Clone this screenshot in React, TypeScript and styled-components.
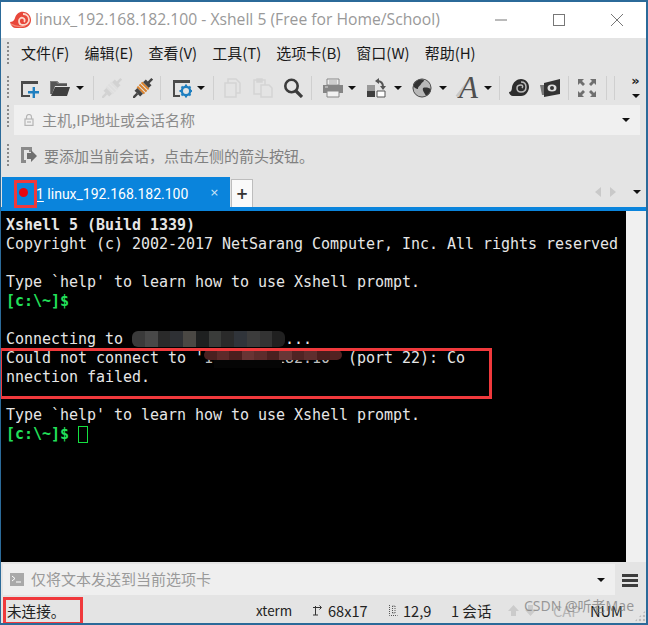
import React from "react";
import styled, { createGlobalStyle } from "styled-components";

const GlobalStyle = createGlobalStyle`
	html, body {
		margin: 0;
		padding: 0;
		background: #e4e4e4;
	}
`;

const uiFont = `"Noto Sans CJK SC", "Noto Sans", sans-serif`;

const Win = styled.div`
	position: relative;
	box-sizing: border-box;
	width: 648px;
	height: 625px;
	display: flex;
	flex-direction: column;
	background: #e4e4e4;
	border-style: solid;
	border-color: #2b6a99;
	border-width: 2px 2px 2px 1px;
	font-family: ${uiFont};
	font-size: 15px;
	overflow: hidden;
`;
const TitleBar = styled.div`
	height: 36px;
	flex: none;
	background: #fff;
	display: flex;
	align-items: center;
	padding-left: 9px;
`;
const TitleText = styled.div`
	flex: 1;
	margin-left: 3px;
	margin-bottom: 2px;
	font-family: "Open Sans", "Noto Sans", sans-serif;
	font-size: 15.7px;
	color: #999;
	white-space: nowrap;
`;
const WinControls = styled.div`
	display: flex;
	align-items: center;
	padding-right: 23px;
	gap: 46px;
`;
const Menu = styled.div`
	height: 32px;
	flex: none;
	display: flex;
	align-items: center;
	padding-left: 6px;
`;
const Grip = styled.div`
	width: 2px;
	height: 24px;
	flex: none;
	background: repeating-linear-gradient(#8a8a8a 0 2px, transparent 2px 4px);
`;
const MenuItem = styled.div<{ $first?: boolean }>`
	margin-left: ${(p) => (p.$first ? "12px" : "15px")};
	margin-bottom: 3px;
	color: #1a1a1a;
	white-space: nowrap;
`;
const Toolbar = styled.div`
	height: 35px;
	flex: none;
	display: flex;
	align-items: center;
	padding-left: 6px;
`;
const Tool = styled.div<{ $gap: number }>`
	margin-left: ${(p) => p.$gap}px;
	width: 20px;
	height: 20px;
	flex: none;
	position: relative;
	& > svg {
		display: block;
	}
`;
const Caret = styled.div<{ $gap?: number }>`
	margin-left: ${(p) => p.$gap ?? 0}px;
	flex: none;
	width: 0;
	height: 0;
	border-left: 4px solid transparent;
	border-right: 4px solid transparent;
	border-top: 4px solid #111;
`;
const Sep = styled.div<{ $gap: number }>`
	margin-left: ${(p) => p.$gap}px;
	flex: none;
	width: 1px;
	height: 24px;
	background: #cfcfcf;
`;
const FontGlyph = styled.span`
	position: absolute;
	left: 2px;
	top: -6px;
	font-family: "Liberation Serif", serif;
	font-style: italic;
	font-size: 31px;
	line-height: 31px;
	color: #4f4f4f;
`;
const FontSlash = styled.span`
	position: absolute;
	left: 5px;
	top: -1px;
	width: 3px;
	height: 22px;
	background: #c8c8c8;
	transform: rotate(38deg);
`;
const Chevrons = styled.div`
	margin-left: 15px;
	display: flex;
	flex-direction: column;
	align-items: center;
	gap: 9px;
	width: 11px;
	font-family: "DejaVu Sans", sans-serif;
	font-size: 13px;
	font-weight: 700;
	line-height: 8px;
	color: #222;
`;
const AddressRow = styled.div`
	height: 30px;
	flex: none;
	display: flex;
	padding-left: 6px;
`;
const AddressField = styled.div`
	flex: 1;
	margin-left: 5px;
	margin-right: 6px;
	padding-left: 10px;
	padding-right: 10px;
	display: flex;
	align-items: center;
	background: #f0f0f0;
`;
const AddressText = styled.div`
	flex: 1;
	margin-left: 8px;
	margin-bottom: 2px;
	color: #8c8c8c;
`;
const HintRow = styled.div`
	height: 42px;
	flex: none;
	display: flex;
	align-items: center;
	padding-left: 6px;
`;
const HintText = styled.div`
	margin-left: 4px;
	margin-bottom: 2px;
	color: #808080;
	white-space: nowrap;
`;
const TabRow = styled.div`
	height: 30px;
	flex: none;
	display: flex;
	align-items: flex-end;
	padding-left: 1px;
`;
const Tab = styled.div`
	width: 228px;
	height: 30px;
	display: flex;
	align-items: center;
	background: #0a84dc;
	color: #fff;
	padding-left: 17px;
	box-sizing: border-box;
`;
const Dot = styled.div`
	width: 9px;
	height: 9px;
	border-radius: 50%;
	background: #e8060e;
`;
const TabLabel = styled.div`
	margin-left: 8px;
	margin-top: 3px;
	flex: 1;
	font-family: Roboto, "Noto Sans", sans-serif;
	font-size: 14px;
	white-space: nowrap;
	& u {
		text-underline-offset: 2px;
	}
`;
const TabClose = styled.div`
	margin-right: 11px;
	font-family: "DejaVu Sans", sans-serif;
	font-size: 11px;
	color: #cfe6f7;
`;
const AddTab = styled.div`
	margin-left: 1px;
	width: 20px;
	height: 27px;
	background: #fafafa;
	border: 1px solid #bdbdbd;
	border-bottom: none;
	display: flex;
	align-items: center;
	justify-content: center;
	font-family: "DejaVu Sans", sans-serif;
	font-weight: 700;
	font-size: 15px;
	color: #333;
`;
const TabNav = styled.div`
	margin-left: auto;
	height: 30px;
	display: flex;
	align-items: center;
	padding-right: 5px;
`;
const NavArrow = styled.div<{ $dir: "left" | "right" }>`
	width: 0;
	height: 0;
	margin-right: ${(p) => (p.$dir === "left" ? "9px" : "17px")};
	border-top: 5px solid transparent;
	border-bottom: 5px solid transparent;
	${(p) =>
		p.$dir === "left"
			? "border-right: 6px solid #c9c9c9;"
			: "border-left: 6px solid #c9c9c9;"}
`;
const BlueStrip = styled.div`
	height: 4px;
	flex: none;
	background: #0a84dc;
`;
const TermRow = styled.div`
	height: 351px;
	flex: none;
	display: flex;
`;
const Terminal = styled.div`
	width: 625px;
	flex: none;
	background: #000;
	padding: 5px 0 0 5px;
	box-sizing: border-box;
	font-family: "DejaVu Sans Mono", monospace;
	font-size: 15px;
	letter-spacing: -0.03px;
	line-height: 19px;
	color: #e6e6e6;
`;
const TermLine = styled.div<{ $green?: boolean; $bold?: boolean }>`
	height: 19px;
	white-space: pre;
	color: ${(p) => (p.$green ? "#22e05a" : "#e6e6e6")};
	font-weight: ${(p) => (p.$bold ? 700 : 400)};
`;
const Cursor = styled.span`
	display: inline-block;
	box-sizing: border-box;
	width: 10px;
	height: 17px;
	vertical-align: -4px;
	border: 1px solid #14e040;
`;
const Mosaic = styled.span<{ $chars: number }>`
	display: inline-flex;
	width: ${(p) => p.$chars * 9}px;
	height: 16px;
	vertical-align: -3px;
	overflow: hidden;
	border-radius: 6px;
`;
const MosaicCell = styled.span<{ $color: string }>`
	flex: 1;
	background: ${(p) => p.$color};
`;
const MaskedIp = styled.span`
	position: relative;
	display: inline-block;
	width: 144px;
	height: 19px;
	vertical-align: top;
	color: #bdbdbd;
`;
const IpBand = styled.span`
	position: absolute;
	left: 0;
	top: 1px;
	width: 138px;
	height: 10px;
	display: flex;
	overflow: hidden;
	border-radius: 5px;
`;
const IpSmudge = styled.span`
	position: absolute;
	left: 10px;
	top: 9px;
	width: 68px;
	height: 10px;
	background: #050505;
`;
const Scroll = styled.div`
	width: 20px;
	flex: none;
	background: #f0f0f0;
`;
const SendRow = styled.div`
	margin-top: 2px;
	height: 31px;
	flex: none;
	display: flex;
	padding-left: 2px;
`;
const SendField = styled.div`
	width: 612px;
	flex: none;
	display: flex;
	align-items: center;
	background: #efefef;
	padding-left: 7px;
	padding-right: 10px;
	box-sizing: border-box;
`;
const SendText = styled.div`
	flex: 1;
	margin-left: 7px;
	margin-bottom: 2px;
	color: #9a9a9a;
`;
const Burger = styled.div`
	margin-left: 7px;
	margin-top: 10px;
	width: 16px;
	height: 13px;
	background: repeating-linear-gradient(#3c3c3c 0 3px, transparent 3px 5px);
`;
const Status = styled.div`
	height: 28px;
	flex: none;
	display: flex;
	align-items: center;
	padding: 2px 0 0 6px;
	box-sizing: border-box;
	font-size: 14.6px;
	color: #222;
	position: relative;
`;
const StatusItem = styled.div<{ $x: number; $muted?: boolean; $small?: boolean }>`
	position: absolute;
	left: ${(p) => p.$x}px;
	top: 2px;
	bottom: 0;
	display: flex;
	align-items: center;
	white-space: nowrap;
	font-size: ${(p) => (p.$small ? "13.4px" : "inherit")};
	color: ${(p) => (p.$muted ? "#b5b5b5" : "#222")};
`;
const CornerGrip = styled.div`
	position: absolute;
	right: 0;
	bottom: 1px;
	width: 12px;
	height: 12px;
	background: radial-gradient(circle, #bcbcbc 1.4px, transparent 1.6px) 0 0 / 4px 4px;
	clip-path: polygon(100% 0, 100% 100%, 0 100%);
`;
const Mark = styled.div<{ $x: number; $y: number; $w: number; $h: number }>`
	position: absolute;
	left: ${(p) => p.$x}px;
	top: ${(p) => p.$y}px;
	width: ${(p) => p.$w}px;
	height: ${(p) => p.$h}px;
	box-sizing: border-box;
	border: 3px solid #f0393c;
	pointer-events: none;
`;
const Watermark = styled.div`
	position: absolute;
	left: 523px;
	top: 593px;
	font-family: "Noto Sans", "Noto Sans CJK SC", sans-serif;
	font-size: 14px;
	color: rgba(120, 120, 120, 0.72);
	white-space: nowrap;
`;

const Logo = () => (
	<svg width="22" height="20" viewBox="0 0 22 20">
		<path d="M0 12c2 0 4-1 5-4 1-4 5-7 9-6 4 0 7 4 7 8s-3 8-8 8H6c-3 0-5-2-6-6z" fill="#e8473a" />
		<path d="M13 4c4 0 6 3 6 6s-3 5-6 5-4-2-4-4 2-4 4-3 2 3 1 4" fill="none" stroke="#fbd8cc" strokeWidth="1.8" />
		<path d="M1 14c3 2 9 3 14 2" fill="none" stroke="#f58a78" strokeWidth="1.2" />
	</svg>
);
const Minimize = () => (
	<svg width="12" height="12" viewBox="0 0 12 12"><path d="M0 6h12" stroke="#777" /></svg>
);
const Maximize = () => (
	<svg width="12" height="12" viewBox="0 0 12 12"><rect x=".5" y=".5" width="11" height="11" fill="none" stroke="#777" /></svg>
);
const CloseIcon = () => (
	<svg width="12" height="12" viewBox="0 0 12 12"><path d="M0 0l12 12M12 0L0 12" stroke="#777" /></svg>
);
const NewSession = () => (
	<svg width="20" height="20" viewBox="0 0 20 20">
		<path d="M1 3h17v3H3v11h7v2H1z" fill="#4a4a4a" />
		<path d="M15 9v4h4v2.4h-4V20h-2.4v-4.600H8V13h4.600V9z" fill="#1f7fc0" />
	</svg>
);
const OpenFolder = () => (
	<svg width="20" height="20" viewBox="0 0 20 20">
		<path d="M0 3h7l2 2h8v3H5L2 16H0z" fill="#555" />
		<path d="M5 9h15l-3 9H1z" fill="#3f3f3f" />
		<path d="M0 3h7l2 2h8v1H8L6 4H1v12H0z" fill="#7a7a7a" />
	</svg>
);
const Plug = ({ muted }: { muted?: boolean }) => {
	const dark = muted ? "#d2d2d2" : "#444";
	const band = muted ? "#dedede" : "#d9812b";
	return (
		<svg width="20" height="20" viewBox="0 0 20 20">
			<g transform="rotate(45 10 10)">
				<rect x="8.800" y="-3" width="2.400" height="6" fill={dark} />
				<rect x="6" y="2" width="8" height="4" fill={dark} />
				<rect x="5" y="6" width="10" height="2" fill={band} />
				<rect x="5" y="9" width="10" height="2" fill={band} />
				<rect x="5" y="12" width="10" height="2" fill={band} />
				<rect x="6" y="14" width="8" height="4" fill={dark} />
				<rect x="8.800" y="18" width="2.400" height="6" fill={dark} />
			</g>
		</svg>
	);
};
const Properties = () => (
	<svg width="20" height="20" viewBox="0 0 20 20">
		<path d="M1 2h17v3H3v12h5v2H1z" fill="#4a4a4a" />
		<circle cx="14" cy="13" r="4.200" fill="none" stroke="#1f7fc0" strokeWidth="2.400" />
		<path d="M14 6.500v2.500M14 17v2.500M7.500 13H10M18 13h2.500M9.500 8.500l1.700 1.700M16.800 15.800l1.700 1.700M18.500 8.500l-1.700 1.700M11.200 15.800l-1.700 1.700" stroke="#1f7fc0" strokeWidth="2" />
	</svg>
);
const Copy = () => (
	<svg width="20" height="20" viewBox="0 0 20 20" fill="none" stroke="#d4d4d4" strokeWidth="1.500">
		<path d="M5 5V1h8l4 4v10h-4" />
		<path d="M2 5h11v14H2z" />
	</svg>
);
const Paste = () => (
	<svg width="20" height="20" viewBox="0 0 20 20" fill="none" stroke="#d4d4d4" strokeWidth="1.500">
		<path d="M8 16H1V2h11v5" />
		<path d="M4 1h5v3H4z" fill="#d4d4d4" />
		<path d="M8 7h8l3 3v9H8z" />
	</svg>
);
const Search = () => (
	<svg width="20" height="20" viewBox="0 0 20 20" fill="none">
		<circle cx="8.500" cy="8" r="6.200" stroke="#3c3c3c" strokeWidth="2.600" />
		<path d="M13 13l6 6" stroke="#3c3c3c" strokeWidth="3.200" />
	</svg>
);
const Printer = () => (
	<svg width="20" height="20" viewBox="0 0 20 20">
		<path d="M4 1h12v6H4z" fill="#eee" stroke="#888" />
		<path d="M6 3h8M6 5h8" stroke="#aaa" />
		<path d="M0 7h20v8H0z" fill="#858585" />
		<path d="M4 13h12v6H4z" fill="#f2f2f2" stroke="#888" />
		<path d="M2 9h3" stroke="#ddd" />
	</svg>
);
const Transfer = () => (
	<svg width="20" height="20" viewBox="0 0 20 20">
		<path d="M1 7h8v6H1z" fill="#999" />
		<path d="M1 13h8v6H1z" fill="#3f3f3f" />
		<path d="M11 13h8v6h-8z" fill="#fff" stroke="#555" />
		<path d="M11 3c4 0 6 2 6 6" fill="none" stroke="#555" strokeWidth="2" />
		<path d="M13 0l-4 3 4 3zM14 8h6l-3 4z" fill="#555" />
	</svg>
);
const Globe = () => (
	<svg width="20" height="20" viewBox="0 0 20 20">
		<circle cx="10" cy="10" r="9.500" fill="#b8b8b8" />
		<path d="M4 3c3-2 6-2 8-1 0 2-2 2-3 4S6 8 6 11c-2 0-4-2-5-3 0-2 1-4 3-5zM11 10c3-1 6 0 8 1 0 3-2 6-5 7-1-3-4-5-3-8z" fill="#333" />
		<circle cx="10" cy="10" r="9" fill="none" stroke="#555" />
	</svg>
);
const Shell = () => (
	<svg width="20" height="20" viewBox="0 0 20 20">
		<path d="M0 14c2 0 3-2 3-5 1-5 5-8 9-8 5 0 8 4 8 8s-3 9-8 9H4c-2 0-4-2-4-4z" fill="#2e2e2e" />
		<path d="M12 4c3 0 5 2 5 5s-2 5-5 5-4-2-4-4 2-3 4-3 2 2 1 3" fill="none" stroke="#bdbdbd" strokeWidth="1.500" />
	</svg>
);
const CardIcon = () => (
	<svg width="20" height="20" viewBox="0 0 20 20">
		<path d="M4 5l16-4v15L4 19z" fill="#333" />
		<path d="M0 7h4v10H2z" fill="#777" />
		<ellipse cx="12" cy="10" rx="4.500" ry="3.500" fill="#ddd" />
		<circle cx="12" cy="10" r="2" fill="#333" />
	</svg>
);
const Fullscreen = () => (
	<svg width="20" height="20" viewBox="0 0 20 20" fill="#6f6f6f">
		<path d="M1 1h6L5 3l3 3-2 2-3-3-2 2zM19 1v6l-2-2-3 3-2-2 3-3-2-2zM1 19v-6l2 2 3-3 2 2-3 3 2 2zM19 19h-6l2-2-3-3 2-2 3 3 2-2z" />
	</svg>
);
const Lock = () => (
	<svg width="10" height="12" viewBox="0 0 10 12" fill="none" stroke="#b5b5b5" strokeWidth="1.200">
		<path d="M2.500 5V3a2.500 2.500 0 0 1 5 0v2" />
		<rect x="1" y="5" width="8" height="6.400" />
		<path d="M3 8h4" />
	</svg>
);
const HintArrow = () => (
	<svg width="17" height="18" viewBox="0 0 17 18">
		<path d="M1 1h11v5H9V4H4v10h2v3H1z" fill="#8a8a8a" />
		<path d="M7 7l4 0V4l6 6-6 6v-3H7z" fill="#6f6f6f" />
	</svg>
);
const Prompt = () => (
	<svg width="14" height="13" viewBox="0 0 14 13">
		<rect width="14" height="13" fill="#a9a9a9" />
		<path d="M2 3l3 2.500L2 8" fill="none" stroke="#fff" />
		<path d="M6 9h5" stroke="#fff" />
	</svg>
);
const SizeIcon = () => (
	<svg width="10" height="11" viewBox="0 0 10 11" fill="none" stroke="#333">
		<path d="M3.500 1v9M1 10h5M1 2.500h8M7.500.5l2 2-2 2" />
	</svg>
);
const CursorIcon = () => (
	<svg width="10" height="11" viewBox="0 0 10 11" fill="none" stroke="#555" strokeDasharray="1 1">
		<path d="M1.500 0v10.500h8M4.500 1v7M7 1v7M4.500 1H7M4.500 8H7" />
	</svg>
);
const UpArrow = ({ down }: { down?: boolean }) => (
	<svg width="11" height="11" viewBox="0 0 11 11" fill="#cbcbcb">
		<path d={down ? "M3 0h5v5h3l-5.500 6L0 5h3z" : "M3 11h5V6h3L5.500 0 0 6h3z"} />
	</svg>
);

type Item =
	| { kind: "tool"; gap: number; icon: React.ReactNode }
	| { kind: "caret"; gap: number }
	| { kind: "sep"; gap: number };

const toolbar: Item[] = [
	{ kind: "tool", gap: 11, icon: <NewSession /> },
	{ kind: "tool", gap: 10, icon: <OpenFolder /> },
	{ kind: "caret", gap: 6 },
	{ kind: "sep", gap: 9 },
	{ kind: "tool", gap: 8, icon: <Plug muted /> },
	{ kind: "tool", gap: 11, icon: <Plug /> },
	{ kind: "sep", gap: 7 },
	{ kind: "tool", gap: 11, icon: <Properties /> },
	{ kind: "caret", gap: 5 },
	{ kind: "sep", gap: 8 },
	{ kind: "tool", gap: 9, icon: <Copy /> },
	{ kind: "tool", gap: 10, icon: <Paste /> },
	{ kind: "tool", gap: 10, icon: <Search /> },
	{ kind: "sep", gap: 8 },
	{ kind: "tool", gap: 11, icon: <Printer /> },
	{ kind: "caret", gap: 5 },
	{ kind: "tool", gap: 10, icon: <Transfer /> },
	{ kind: "caret", gap: 8 },
	{ kind: "tool", gap: 10, icon: <Globe /> },
	{ kind: "caret", gap: 7 },
	{ kind: "tool", gap: 10, icon: <><FontSlash /><FontGlyph>A</FontGlyph></> },
	{ kind: "caret", gap: 7 },
	{ kind: "sep", gap: 7 },
	{ kind: "tool", gap: 9, icon: <Shell /> },
	{ kind: "tool", gap: 11, icon: <CardIcon /> },
	{ kind: "sep", gap: 8 },
	{ kind: "tool", gap: 8, icon: <Fullscreen /> },
	{ kind: "sep", gap: 9 },
	{ kind: "sep", gap: 7 },
];

const menus = ["文件(F)", "编辑(E)", "查看(V)", "工具(T)", "选项卡(B)", "窗口(W)", "帮助(H)"];

const grayCells = ["#3a3a3a", "#484848", "#2a2a2a", "#2e3034", "#4a4844", "#1e2020", "#3a3c3a", "#2a2a2a", "#30343a", "#3c3c3c", "#333", "#202020"];
const redCells = ["#4a2020", "#5c2a2a", "#4a1e1e", "#683434", "#5c2c2c", "#4a2020", "#683636", "#502424", "#5e2e2e", "#4a1e1e", "#522222"];

function App() {
	return (
		<>
			<GlobalStyle />
			<Win>
				<TitleBar>
					<Logo />
					<TitleText>linux_192.168.182.100 - Xshell 5 (Free for Home/School)</TitleText>
					<WinControls>
						<Minimize />
						<Maximize />
						<CloseIcon />
					</WinControls>
				</TitleBar>
				<Menu>
					<Grip />
					{menus.map((m, i) => (
						<MenuItem key={m} $first={i === 0}>
							{m}
						</MenuItem>
					))}
				</Menu>
				<Toolbar>
					<Grip />
					{toolbar.map((item, i) =>
						item.kind === "tool" ? (
							<Tool key={i} $gap={item.gap}>
								{item.icon}
							</Tool>
						) : item.kind === "caret" ? (
							<Caret key={i} $gap={item.gap} />
						) : (
							<Sep key={i} $gap={item.gap} />
						)
					)}
					<Chevrons>
						<span>»</span>
						<Caret />
					</Chevrons>
				</Toolbar>
				<AddressRow>
					<Grip />
					<AddressField>
						<Lock />
						<AddressText>主机,IP地址或会话名称</AddressText>
						<Caret />
					</AddressField>
				</AddressRow>
				<HintRow>
					<Grip />
					<Tool $gap={11}>
						<HintArrow />
					</Tool>
					<HintText>要添加当前会话，点击左侧的箭头按钮。</HintText>
				</HintRow>
				<TabRow>
					<Tab>
						<Dot />
						<TabLabel>
							<u>1</u> linux_192.168.182.100
						</TabLabel>
						<TabClose>×</TabClose>
					</Tab>
					<AddTab>+</AddTab>
					<TabNav>
						<NavArrow $dir="left" />
						<NavArrow $dir="right" />
						<Caret />
					</TabNav>
				</TabRow>
				<BlueStrip />
				<TermRow>
					<Terminal>
						<TermLine $bold>Xshell 5 (Build 1339)</TermLine>
						<TermLine>Copyright (c) 2002-2017 NetSarang Computer, Inc. All rights reserved</TermLine>
						<TermLine> </TermLine>
						<TermLine>Type `help' to learn how to use Xshell prompt.</TermLine>
						<TermLine $green $bold>[c:\~]$ </TermLine>
						<TermLine> </TermLine>
						<TermLine>
							Connecting to{" "}
							<Mosaic $chars={17}>
								{grayCells.map((c, i) => (
									<MosaicCell key={i} $color={c} />
								))}
							</Mosaic>
							...
						</TermLine>
						<TermLine>
							Could not connect to '
							<MaskedIp>
								192.168.182.10'
								<IpSmudge />
								<IpBand>
									{redCells.map((c, i) => (
										<MosaicCell key={i} $color={c} />
									))}
								</IpBand>
							</MaskedIp>
							(port 22): Co
						</TermLine>
						<TermLine>nnection failed.</TermLine>
						<TermLine> </TermLine>
						<TermLine>Type `help' to learn how to use Xshell prompt.</TermLine>
						<TermLine $green $bold>
							[c:\~]$ <Cursor />
						</TermLine>
					</Terminal>
					<Scroll />
				</TermRow>
				<SendRow>
					<SendField>
						<Prompt />
						<SendText>仅将文本发送到当前选项卡</SendText>
						<Caret />
					</SendField>
					<Burger />
				</SendRow>
				<Status>
					未连接。
					<StatusItem $x={255} $small>xterm</StatusItem>
					<StatusItem $x={311}><SizeIcon /></StatusItem>
					<StatusItem $x={327}>68x17</StatusItem>
					<StatusItem $x={387}><CursorIcon /></StatusItem>
					<StatusItem $x={402}>12,9</StatusItem>
					<StatusItem $x={450}>1 会话</StatusItem>
					<StatusItem $x={507}><UpArrow /></StatusItem>
					<StatusItem $x={524}><UpArrow down /></StatusItem>
					<StatusItem $x={552} $muted>CAP</StatusItem>
					<StatusItem $x={589}>NUM</StatusItem>
					<CornerGrip />
				</Status>
				<Mark $x={13} $y={178} $w={23} $h={28} />
				<Mark $x={-2} $y={346} $w={493} $h={51} />
				<Mark $x={2} $y={595} $w={80} $h={28} />
				<Watermark>CSDN @听老Mae</Watermark>
			</Win>
		</>
	);
}

export default App;
